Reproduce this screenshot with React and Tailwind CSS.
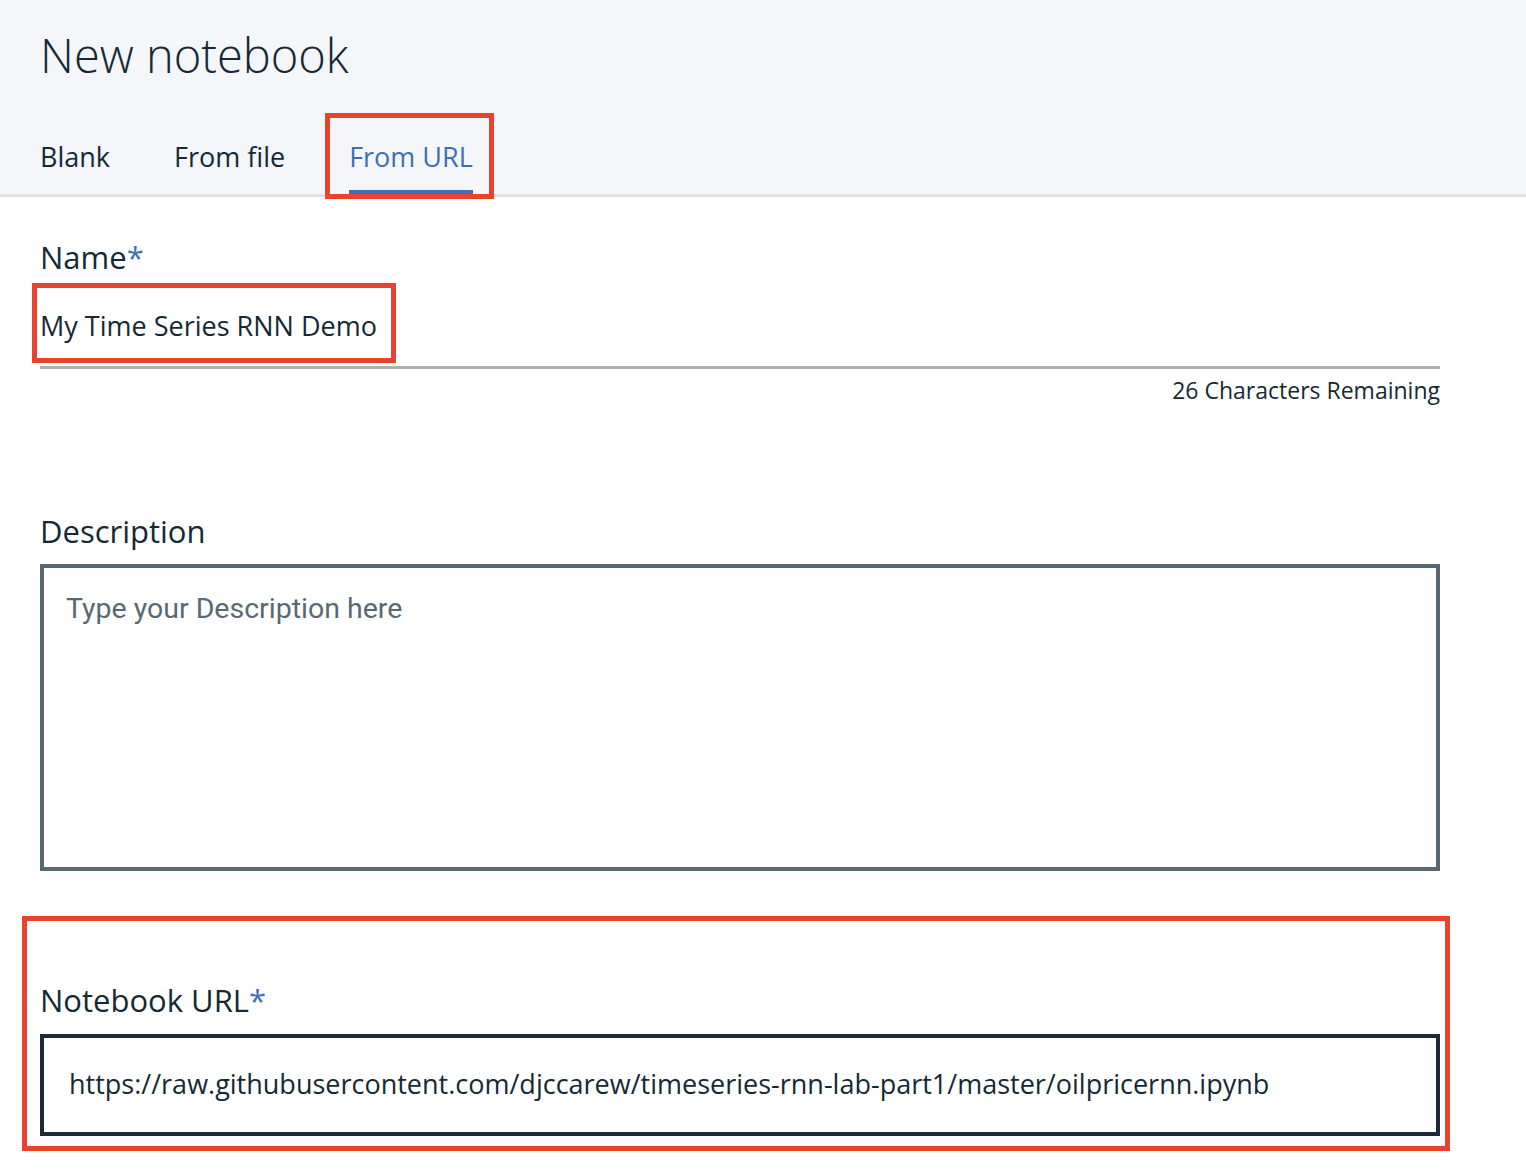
const font = { fontFamily: '"Open Sans", "Noto Sans", sans-serif' };

const RedBox = ({ className }) => (
  <div className={`pointer-events-none absolute border-[5px] border-[#e8432d] ${className}`} />
);

const Tab = ({ label, active }) => (
  <div
    className={`relative pb-[16px] text-[27px] leading-[35px] border-b-4 ${
      active ? "text-[#3d70b2] border-[#3d70b2]" : "text-[#152935] border-transparent"
    }`}
  >
    {label}
    {active && <RedBox className="-left-[24px] -right-[21px] -top-[26px] -bottom-[9px]" />}
  </div>
);

const Label = ({ children, required }) => (
  <div className="text-[31px] leading-[40px] text-[#152935]">
    {children}
    {required && <span className="text-[#3d70b2]">*</span>}
  </div>
);

export default function App() {
  return (
    <div className="min-h-[1170px] bg-white" style={font}>
      {/* header */}
      <div className="bg-[#f4f6fa] border-b-[3px] border-[#dfe3e6] px-[40px] pt-[23px]">
        <h1 className="text-[47px] leading-[64px] font-light text-[#152935]">New notebook</h1>
        <div className="mt-[52px] flex gap-[64px]">
          <Tab label="Blank" />
          <Tab label="From file" />
          <Tab label="From URL" active />
        </div>
      </div>

      {/* form */}
      <div className="ml-[40px] w-[1400px] pt-[40px]">
        <Label required>Name</Label>
        <div className="pt-[31px] pb-[23px] border-b-[3px] border-[#aeaeae]">
          <span className="relative inline-block text-[27px] leading-[35px] text-[#152935]">
            My Time Series RNN Demo
            <RedBox className="-left-[8px] -right-[19px] -top-[25px] -bottom-[20px]" />
          </span>
        </div>
        <div className="mt-[5px] text-right text-[23px] leading-[32px] text-[#152935]">
          26 Characters Remaining
        </div>

        <div className="mt-[105px]">
          <Label>Description</Label>
          <div className="mt-[13px] h-[307px] border-4 border-[#5a6872] pl-[22px] pt-[23px]">
            <span
              className="text-[28.5px] leading-[36px] text-[#5a6872]"
              style={{ fontFamily: 'Roboto, "Open Sans", sans-serif' }}
            >
              Type your Description here
            </span>
          </div>
        </div>

        <div className="relative mt-[109px]">
          <RedBox className="-left-[18px] -right-[10px] -top-[64px] -bottom-[15px]" />
          <Label required>Notebook URL</Label>
          <div className="mt-[14px] border-4 border-[#1f2a36] pl-[25px] pt-[28px] pb-[30px] text-[27px] leading-[36px] text-[#152935]">
            https://raw.githubusercontent.com/djccarew/timeseries-rnn-lab-part1/master/oilpricernn.ipynb
          </div>
        </div>
      </div>
    </div>
  );
}
